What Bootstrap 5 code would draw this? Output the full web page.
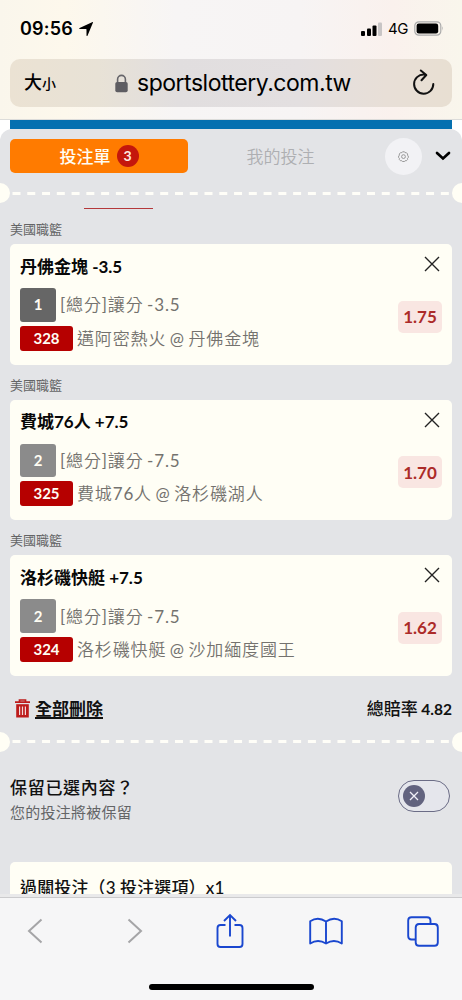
<!DOCTYPE html>
<html lang="zh-Hant">
<head>
<meta charset="utf-8">
<meta name="viewport" content="width=device-width, initial-scale=1">
<title>投注單</title>
<link href="https://cdn.jsdelivr.net/npm/bootstrap@5.3.0/dist/css/bootstrap.min.css" rel="stylesheet">
<style>
body{font-family:Lato,"Noto Sans CJK TC",sans-serif;height:1000px;background:#fff;color:#111;line-height:1}
svg{display:block;flex:none}
.chrome-top{height:120px;background:linear-gradient(90deg,#faf6ec 0,#fdf8ec 14%,#f7f5f5 38%,#f7f4f4 65%,#faf1ed 85%,#f9f6ec 100%);border-bottom:1px solid #dcdcda;font-family:Inter,"Noto Sans CJK TC",sans-serif;color:#000}
.status{height:59px;padding:0 18px 2px 20px}
.clock{font-size:18px;font-weight:600;letter-spacing:.2px}
.net{font-size:15px;font-weight:400;letter-spacing:-.4px}
.address{height:48px;margin:0 10px;border-radius:10px;padding:0 17px 0 14px;background:linear-gradient(90deg,#ebe2d3 0,#e8e2d6 20%,#e1dedf 38%,#e3dfe0 65%,#e8dfd7 85%,#e8dfd2 100%)}
.addr-text{font-size:23px;letter-spacing:-.48px}
.banner{height:9px;margin:0 10px;background:#0570b0}
.sheet{height:765px;background:#e3e4e7;border-radius:12px 12px 0 0}
.sheet-wrap{height:768px;background:#e9e9ea}
.tabs-row{height:54px;padding:0 10px}
.tab-on{width:178px;height:34px;border-radius:5px;background:#ff7b00;color:#fffdf3;font-size:17px;font-weight:500}
.count{width:22px;height:22px;margin-left:6px;background:#c4170c;font-size:14px;font-weight:700;color:#ffece0}
.tab-off{width:185px;font-size:17px;font-weight:300;color:#aeafb2}
.gear{width:37px;height:37px;background:#f2f2f5}
.tear{height:20px}
.tear i{width:10px;height:20px;background:#fffef5}
.tear .l{border-radius:0 10px 10px 0}
.tear .r{border-radius:10px 0 0 10px}
.marker{width:69px;height:1.5px;background:#b4383b;margin:4.5px 0 0 84px}
.league{height:35.2px;padding:14px 10px 0;font-size:13px;line-height:13px;color:#636466}
.bet{height:120.4px;margin:0 10px;padding:0 10px;background:#fffef5;border-radius:5px}
.bet-title{height:44px;font-size:17px;font-weight:700;color:#080808}
.pick,.game{border-radius:3px;color:#fffdf3;font-weight:700;font-size:15px}
.pick{width:36px;height:33.5px;background:#666;margin-right:4px}
.pick.away{background:#8b8b8b}
.game{width:53px;height:25px;background:#b60000;margin-right:4px}
.desc{font-size:17px;letter-spacing:.85px;word-spacing:-1.6px;color:#74726e;white-space:nowrap}
.cjk{font-family:Lato,"Noto Sans CJK TC DemiLight","Noto Sans CJK TC",sans-serif}
.odds{width:44px;height:32px;margin-top:16.5px;border-radius:5px;background:#f9e6e2;color:#ac2b28;font-size:17px;font-weight:700}
.close-cell{height:40px;padding-right:2px}
.sum{height:56px;padding:10px 10px 0 15px;font-size:17px;font-weight:700}
.del{text-decoration:underline;text-underline-offset:2px;text-decoration-thickness:1.5px}
.total{font-weight:500;word-spacing:-.8px}
.total b{font-size:15.500px}
.keep{padding:24px 12px 0 10px;height:110px}
.keep-t{font-size:17px;letter-spacing:.7px;font-weight:500;line-height:24px}
.keep-s{font-size:15px;letter-spacing:.25px;color:#646567;line-height:24px}
.toggle{width:52px;height:32px;margin-top:4px;border:1.5px solid #6b6c86;border-radius:16px;padding-left:4px;background:#e5e6ec}
.knob{width:22px;height:22px;background:#62637f}
.parlay{height:34px;margin:0 10px;padding:14px 10px 0;background:#fffef5;border-radius:5px 5px 0 0;font-size:17px;font-weight:500;line-height:24px;letter-spacing:.13px}
.chrome-bottom{height:103px;background:#f6f6f7;border-top:1px solid #cbcbcd}
.tools{height:66px;padding:0 22px 0 18px}
.tools>span{width:34px}
.home{width:165px;height:6px;border-radius:3px;background:#000;margin:20px auto 0}
</style>
</head>
<body class="overflow-hidden">
<header class="chrome-top">
  <div class="status d-flex align-items-center">
    <span class="clock">09:56</span>
    <svg style="margin-left:5px" width="16" height="16" viewBox="0 0 16 16"><path d="M14.600.9Q15.300.8 15 1.600L9.600 14.500Q9 15.600 8.500 14.500V8.500Q8.500 8 8 8H1.700Q.5 7.600 1.600 7Z" fill="#000"/></svg>
    <svg class="ms-auto" width="22" height="14" viewBox="0 0 22 14"><g fill="#000"><rect x="0" y="9" width="4" height="5" rx="1"/><rect x="6" y="6.5" width="4" height="7.5" rx="1"/><rect x="11.5" y="3.5" width="4" height="10.5" rx="1"/></g><rect x="17" y="0.5" width="4" height="13.5" rx="1" fill="#c8c5c5"/></svg>
    <span class="net" style="margin-left:5px">4G</span>
    <svg style="margin-left:6px" width="30" height="15" viewBox="0 0 30 15"><rect x=".8" y=".8" width="26" height="13.4" rx="4" fill="none" stroke="#aaa" stroke-width="1.2"/><rect x="2.600" y="2.600" width="21.600" height="9.800" rx="2.200"/><path d="M28.200 5.300q1.700 2.200 0 4.400z" fill="#aaa"/></svg>
  </div>
  <div class="address d-flex align-items-center">
    <span style="font-size:18px;font-weight:500">大<span style="font-size:14px">小</span></span>
    <svg style="margin-left:59px" width="13" height="19" viewBox="0 0 13 19"><path d="M2.600 9V5.300a3.900 3.900 0 0 1 7.800 0V9" fill="none" stroke="#66656a" stroke-width="1.600"/><rect x=".3" y="8" width="12.400" height="10.300" rx="1.800" fill="#5e5d62"/></svg>
    <span class="addr-text" style="margin-left:9px">sportslottery.com.tw</span>
    <svg class="ms-auto" width="24" height="28" viewBox="0 0 24 28"><path d="M13 5.500A9.600 9.600 0 1 0 22.300 15M9.800 1.500 15.300 6 10.500 11.200" fill="none" stroke="#111" stroke-width="2" stroke-linecap="round" stroke-linejoin="round"/></svg>
  </div>
</header>
<div class="banner"></div>
<main class="sheet-wrap" style="background:linear-gradient(#fff 20px,#e9e9ea 20px)">
<div class="sheet overflow-hidden">
  <div class="tabs-row d-flex align-items-center">
    <div class="tab-on d-flex align-items-center justify-content-center">投注單<span class="count rounded-circle d-flex align-items-center justify-content-center">3</span></div>
    <div class="tab-off cjk text-center">我的投注</div>
    <div class="gear rounded-circle d-flex align-items-center justify-content-center" style="margin-left:12px"><svg width="11" height="11" viewBox="0 0 11 11" fill="none" stroke="#8f8f8f" stroke-width=".9"><path d="M4.500.8h2l.6.9 1.200-.1 1.300 1.400-.1 1.200.8.800v1.500l-.8.800.1 1.200-1.300 1.300-1.200-.1-.6.800h-2l-.7-.8-1.200.1-1.300-1.300.1-1.200-.8-.8V5l.8-.8-.1-1.200 1.300-1.400 1.200.1z"/><circle cx="5.500" cy="5.600" r="1.900"/></svg></div>
    <svg class="ms-auto me-1" style="transform:translateX(3px)" width="16" height="10" viewBox="0 0 16 10"><path d="m2 2 6 5.500L14 2" fill="none" stroke="#000" stroke-width="2.700" stroke-linecap="round"/></svg>
  </div>
  <div class="tear d-flex align-items-center justify-content-between"><i class="l"></i><svg width="442" height="3" viewBox="0 0 442 3"><path d="M2.500 1.500H439" stroke="#fffef8" stroke-width="3" stroke-dasharray="8 6.770"/></svg><i class="r"></i></div>
  <div class="marker"></div>
  <section>
    <div class="league">美國職籃</div>
    <article class="bet d-flex justify-content-between">
      <div><div class="bet-title d-flex align-items-center">丹佛金塊 -3.5</div>
        <div class="d-flex align-items-center"><span class="pick d-flex align-items-center justify-content-center">1</span><span class="desc cjk">[總分]讓分 -3.5</span></div>
        <div class="d-flex align-items-center mt-1"><span class="game d-flex align-items-center justify-content-center">328</span><span class="desc cjk">邁阿密熱火 @ 丹佛金塊</span></div></div>
      <div class="d-flex flex-column align-items-end"><div class="close-cell d-flex align-items-center"><svg width="16" height="16" viewBox="0 0 16 16"><path d="m1 1 14 14M15 1 1 15" stroke="#222" stroke-width="1.400"/></svg></div><div class="odds d-flex align-items-center justify-content-center">1.75</div></div>
    </article>
    <div class="league">美國職籃</div>
    <article class="bet d-flex justify-content-between">
      <div><div class="bet-title d-flex align-items-center">費城76人 +7.5</div>
        <div class="d-flex align-items-center"><span class="pick away d-flex align-items-center justify-content-center">2</span><span class="desc cjk">[總分]讓分 -7.5</span></div>
        <div class="d-flex align-items-center mt-1"><span class="game d-flex align-items-center justify-content-center">325</span><span class="desc cjk">費城76人 @ 洛杉磯湖人</span></div></div>
      <div class="d-flex flex-column align-items-end"><div class="close-cell d-flex align-items-center"><svg width="16" height="16" viewBox="0 0 16 16"><path d="m1 1 14 14M15 1 1 15" stroke="#222" stroke-width="1.400"/></svg></div><div class="odds d-flex align-items-center justify-content-center">1.70</div></div>
    </article>
    <div class="league">美國職籃</div>
    <article class="bet d-flex justify-content-between">
      <div><div class="bet-title d-flex align-items-center">洛杉磯快艇 +7.5</div>
        <div class="d-flex align-items-center"><span class="pick away d-flex align-items-center justify-content-center">2</span><span class="desc cjk">[總分]讓分 -7.5</span></div>
        <div class="d-flex align-items-center mt-1"><span class="game d-flex align-items-center justify-content-center">324</span><span class="desc cjk">洛杉磯快艇 @ 沙加緬度國王</span></div></div>
      <div class="d-flex flex-column align-items-end"><div class="close-cell d-flex align-items-center"><svg width="16" height="16" viewBox="0 0 16 16"><path d="m1 1 14 14M15 1 1 15" stroke="#222" stroke-width="1.400"/></svg></div><div class="odds d-flex align-items-center justify-content-center">1.62</div></div>
    </article>
  </section>
  <div class="sum d-flex align-items-center">
    <svg width="15" height="19" viewBox="0 0 15 19"><path d="M0 3.200h15M4.500 3V1h6v2" fill="none" stroke="#bd1b1b" stroke-width="1.700"/><path d="M1.200 5.200h12.600V18.500H1.200z" fill="#bd1b1b"/><path d="M4.600 7.500v8.600M7.500 7.500v8.600M10.400 7.500v8.600" stroke="#f2d9da" stroke-width="1.200"/></svg>
    <span class="del" style="margin-left:5px">全部刪除</span><span class="total ms-auto">總賠率 <b>4.82</b></span>
  </div>
  <div class="tear d-flex align-items-center justify-content-between"><i class="l"></i><svg width="442" height="3" viewBox="0 0 442 3"><path d="M2.500 1.500H439" stroke="#fffef8" stroke-width="3" stroke-dasharray="8 6.770"/></svg><i class="r"></i></div>
  <div class="keep d-flex justify-content-between">
    <div><div class="keep-t">保留已選內容？</div><div class="keep-s">您的投注將被保留</div></div>
    <div class="toggle d-flex align-items-center"><span class="knob rounded-circle d-flex align-items-center justify-content-center"><svg width="10" height="10" viewBox="0 0 10 10"><path d="m1 1 8 8M9 1 1 9" stroke="#f0f0f8" stroke-width="1.300"/></svg></span></div>
  </div>
  <div class="parlay">過關投注（3 投注選項）x1</div>
</div>
</main>
<footer class="chrome-bottom">
  <div class="tools d-flex align-items-center justify-content-between">
    <span class="d-flex justify-content-center"><svg width="18" height="28" viewBox="0 0 18 28"><path d="M15.500 2.500 3 14l12.500 11.500" fill="none" stroke="#a5a5a7" stroke-width="2"/></svg></span>
    <span class="d-flex justify-content-center"><svg style="margin-left:5px" width="18" height="28" viewBox="0 0 18 28"><path d="M2.500 2.500 15 14 2.500 25.500" fill="none" stroke="#a5a5a7" stroke-width="2"/></svg></span>
    <span class="d-flex justify-content-center"><svg style="margin-left:2px" width="28" height="36" viewBox="0 0 28 36"><path d="M9.500 12H4.500Q1.500 12 1.500 15V31Q1.500 34 4.500 34H23.500Q26.500 34 26.500 31V15Q26.500 12 23.500 12H18.500M14 23.500V2M8 8l6-6 6 6" fill="none" stroke="#1a47cf" stroke-width="1.900"/></svg></span>
    <span class="d-flex justify-content-center"><svg width="34" height="28" viewBox="0 0 34 28"><path d="M17 4.500Q9-.8 1.200 4.200V26.500Q9 21.500 17 26.500Q25 21.500 32.800 26.500V4.200Q25-.8 17 4.500V26.500" fill="none" stroke="#1a47cf" stroke-width="1.900" stroke-linejoin="round"/></svg></span>
    <span class="d-flex justify-content-center"><svg width="32" height="31" viewBox="0 0 32 31"><path d="M8.500 23.500H4.500Q1.200 23.500 1.200 20V4.500Q1.200 1.200 4.500 1.200H20Q23.500 1.200 23.500 4.500V8M12 8H27.500Q30.800 8 30.800 11.500V26.500Q30.800 29.800 27.500 29.800H12Q8.700 29.800 8.700 26.500V11.500Q8.700 8 12 8Z" fill="none" stroke="#1a47cf" stroke-width="1.900"/></svg></span>
  </div>
  <div class="home"></div>
</footer>
<script src="https://cdn.jsdelivr.net/npm/bootstrap@5.3.0/dist/js/bootstrap.bundle.min.js"></script>
</body>
</html>
